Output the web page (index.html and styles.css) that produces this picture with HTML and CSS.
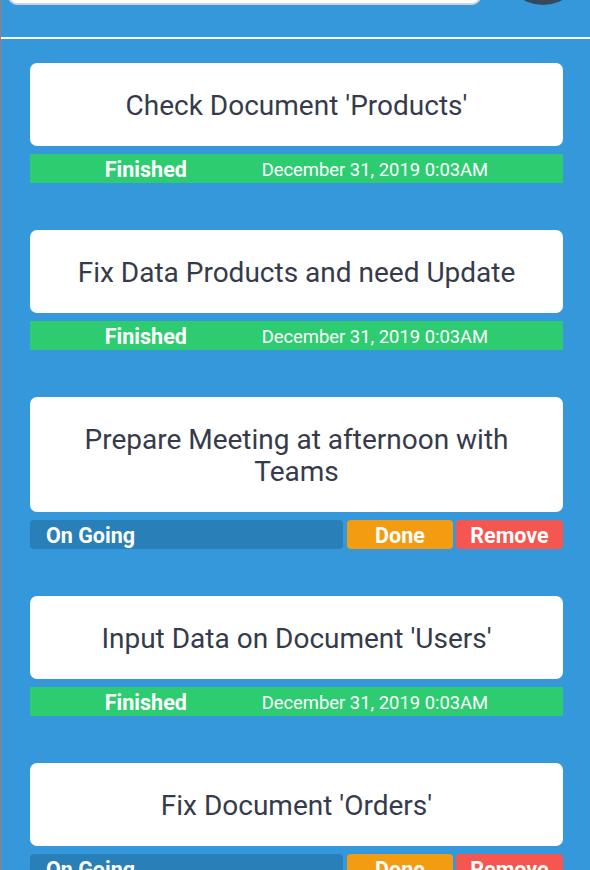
FILE: index.html
```html
<!DOCTYPE html>
<html lang="en">
<head>
<meta charset="utf-8">
<title>Todo List</title>
<link rel="stylesheet" href="styles.css">
</head>
<body>
<div class="page">
  <header class="header">
    <input class="search" type="text" aria-label="New task">
    <div class="avatar"></div>
  </header>
  <main class="list">
    <section class="item">
      <div class="card">Check Document 'Products'</div>
      <div class="status finished"><span class="label">Finished</span><span class="date">December 31, 2019 0:03AM</span></div>
    </section>
    <section class="item">
      <div class="card">Fix Data Products and need Update</div>
      <div class="status finished"><span class="label">Finished</span><span class="date">December 31, 2019 0:03AM</span></div>
    </section>
    <section class="item">
      <div class="card">Prepare Meeting at afternoon with Teams</div>
      <div class="status actions"><span class="ongoing">On Going</span><button class="btn done">Done</button><button class="btn remove">Remove</button></div>
    </section>
    <section class="item">
      <div class="card">Input Data on Document 'Users'</div>
      <div class="status finished"><span class="label">Finished</span><span class="date">December 31, 2019 0:03AM</span></div>
    </section>
    <section class="item">
      <div class="card">Fix Document 'Orders'</div>
      <div class="status actions"><span class="ongoing">On Going</span><button class="btn done">Done</button><button class="btn remove">Remove</button></div>
    </section>
  </main>
</div>
</body>
</html>
```
FILE: styles.css
```css
html, body {
  margin: 0;
  padding: 0;
  background: #3498db;
  font-family: Roboto, "Liberation Sans", sans-serif;
  overflow: hidden;
}

.page {
  border-left: 1px solid #a8786c;
  min-height: 1100px;
  background: #3498db;
}

.header {
  display: flex;
  align-items: flex-end;
  gap: 22px;
  margin-top: -75px;
  padding: 0 7px 32px 7px;
  border-bottom: 2px solid #ffffff;
}

.search {
  width: 473px;
  height: 50px;
  box-sizing: border-box;
  margin: 0;
  border: 2px solid #cfd3d8;
  border-radius: 9px;
  background: #ffffff;
  flex: none;
}

.avatar {
  width: 80px;
  height: 80px;
  border-radius: 50%;
  background: #34495e;
  flex: none;
}

.list {
  padding: 24px 27px 0 29px;
}

.item {
  margin-bottom: 47px;
}

.card {
  background: #ffffff;
  border-radius: 7px;
  padding: 27px 24px 24px;
  text-align: center;
  font-size: 28px;
  line-height: 32px;
  color: #363b4b;
}

.status {
  margin-top: 8px;
  height: 29px;
  box-sizing: border-box;
  color: #ffffff;
  display: flex;
  align-items: center;
}

.finished {
  background: #2ecc71;
  justify-content: space-evenly;
  padding-top: 2px;
}

.label {
  font-weight: 700;
  font-size: 21.5px;
}

.date {
  font-size: 18.4px;
}

.actions {
  gap: 3px;
}

.ongoing {
  flex: 1;
  height: 29px;
  line-height: 32px;
  background: #2980b9;
  border-radius: 4px;
  padding-left: 16px;
  font-weight: 700;
  font-size: 21.5px;
}

.btn {
  border: 0;
  margin: 0;
  padding: 2px 0 0;
  height: 29px;
  border-radius: 4px;
  color: #ffffff;
  font-family: Roboto, "Liberation Sans", sans-serif;
  font-weight: 700;
  font-size: 21.5px;
}

.done {
  width: 106px;
  margin-left: 1px;
  background: #f39c12;
}

.remove {
  width: 107px;
  background: #f5564f;
}
```
